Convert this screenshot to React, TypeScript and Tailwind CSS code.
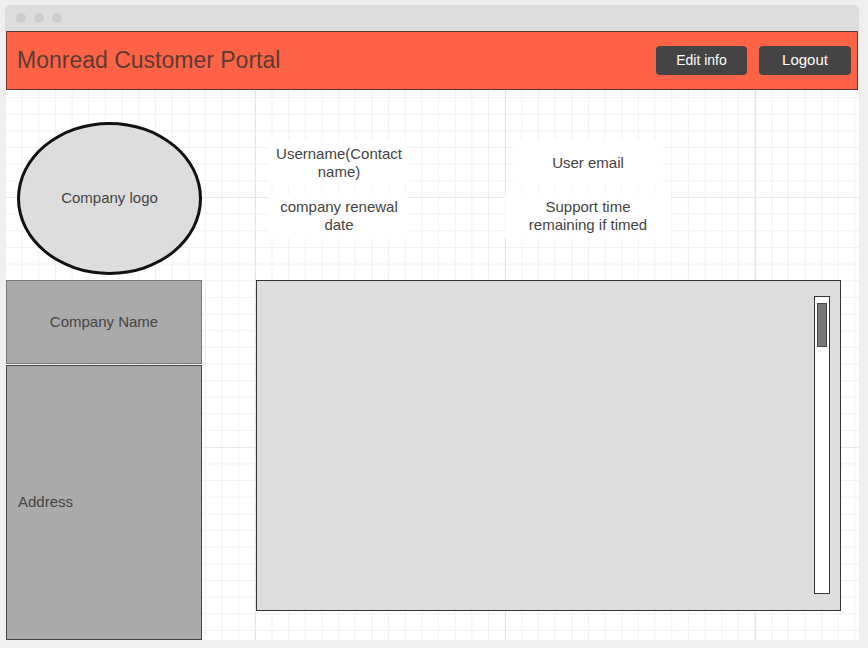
import React from "react";

const font = { fontFamily: '"Liberation Sans", Arial, sans-serif' };

function InfoText({ children, className = "" }: { children: React.ReactNode; className?: string }) {
  return (
    <div className={`flex items-center justify-center bg-white text-center text-[15px] leading-[18px] text-[#444] ${className}`}>
      {children}
    </div>
  );
}

export default function App() {
  return (
    <div className="h-[648px] w-[868px] overflow-hidden bg-[#efefef] pl-[5px] pt-[5px]" style={font}>
      <div className="flex h-[635px] w-[854px] flex-col">
        {/* title bar */}
        <div className="flex h-[26px] items-center gap-[8px] rounded-t-[5px] bg-[#dddddd] pl-[11px]">
          <span className="h-[10px] w-[10px] rounded-full bg-[#cccccc]" />
          <span className="h-[10px] w-[10px] rounded-full bg-[#cccccc]" />
          <span className="h-[10px] w-[10px] rounded-full bg-[#cccccc]" />
        </div>

        {/* header */}
        <div className="ml-[1px] mr-[1px] flex h-[59px] items-center justify-between border border-[#5b3b32] bg-[#ff6347] pl-[10px] pr-[6px]">
          <h1 className="text-[23px] leading-none text-[#5b3b32]">Monread Customer Portal</h1>
          <div className="flex gap-[12px]">
            <button className="h-[29px] w-[91px] rounded-[4px] bg-[#444444] text-[14px] text-white">Edit info</button>
            <button className="h-[29px] w-[92px] rounded-[4px] bg-[#444444] text-[15px] text-white">Logout</button>
          </div>
        </div>

        {/* canvas */}
        <div className="relative ml-[1px] flex flex-1 bg-white bg-[linear-gradient(90deg,#e4e4e4_1px,transparent_1px),linear-gradient(#e9e9e9_1px,transparent_1px),linear-gradient(90deg,#f1f1f1_1px,transparent_1px),linear-gradient(#f1f1f1_1px,transparent_1px)] bg-[size:250px_100%,100%_250px,16.667px_100%,100%_16.667px] bg-[position:249px_0,0_107px,-1px_0,0_7px]">
          {/* left column */}
          <div className="flex w-[196px] flex-col">
            <div className="flex h-[190px] items-start pl-[11px] pt-[32px]">
              <div className="flex h-[153px] w-[185px] items-center justify-center rounded-[50%] border-[3px] border-[#111111] bg-[#dddddd] text-[15px] text-[#444]">
                Company logo
              </div>
            </div>
            <div className="flex h-[84px] items-center justify-center border border-[#777] bg-[#aaaaaa] text-[15px] text-[#444]">
              Company Name
            </div>
            <div className="mt-[1px] flex flex-1 items-center border border-[#444] bg-[#aaaaaa] pl-[11px] text-[15px] text-[#444]">
              Address
            </div>
          </div>

          {/* right area */}
          <div className="ml-[54px] flex flex-col">
            <div className="grid h-[190px] grid-cols-[166px_166px] gap-x-[83px] pt-[50px]">
              <div className="flex flex-col items-center gap-[8px]">
                <InfoText className="h-[46px] w-[140px]">
                  Username(Contact
                  <br />
                  name)
                </InfoText>
                <InfoText className="h-[44px] w-[140px]">
                  company renewal
                  <br />
                  date
                </InfoText>
              </div>
              <div className="flex flex-col items-center gap-[8px]">
                <InfoText className="h-[46px] w-[150px]">User email</InfoText>
                <InfoText className="h-[44px] w-[166px]">
                  Support time
                  <br />
                  remaining if timed
                </InfoText>
              </div>
            </div>
            <div className="flex h-[331px] w-[585px] justify-end border border-[#333] bg-[#dddddd] pr-[10px] pt-[15px]">
              <div className="h-[298px] w-[16px] border border-[#333] bg-white px-[2px] pt-[6px]">
                <div className="h-[44px] w-full border border-[#444] bg-[#777777]" />
              </div>
            </div>
          </div>
        </div>
      </div>
    </div>
  );
}
